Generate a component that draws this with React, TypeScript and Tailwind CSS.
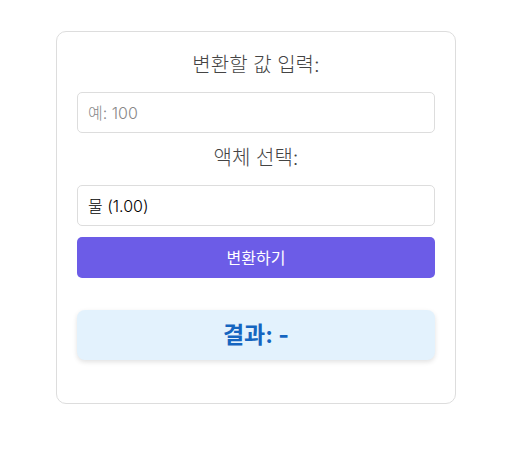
export default function App() {
  return (
    <div className="min-h-screen bg-white pt-[31px]" style={{ fontFamily: 'Inter, "Noto Sans CJK KR", sans-serif' }}>
      <div className="ml-[56px] w-[400px] rounded-[10px] border border-[#ddd] bg-white px-5 pt-5 pb-[43px]">
        <label className="block text-center text-[20px] font-light leading-[27px] text-[#444]">변환할 값 입력:</label>
        <input
          type="number"
          placeholder="예: 100"
          className="mt-[13px] block h-[41px] w-full rounded-[5px] border border-[#ddd] px-[10px] text-[16px] font-light text-[#222] placeholder-[#888] outline-none"
        />
        <label className="mt-[12px] block text-center text-[20px] font-light leading-[27px] text-[#444]">액체 선택:</label>
        <div className="mt-[13px] flex h-[41px] w-full items-center rounded-[5px] border border-[#ddd] px-[10px] text-[16px] font-light text-black">
          물 (1.00)
        </div>
        <button className="mt-[11px] block h-[41px] w-full rounded-[5px] bg-[#6c5ce7] text-[16px] text-white">
          변환하기
        </button>
        <div className="mt-[32px] flex h-[50px] items-center justify-center rounded-[8px] bg-[#e3f2fd] text-[23px] font-bold text-[#1565c0] shadow-[0_2px_5px_rgba(0,0,0,0.12)]">
          결과: -
        </div>
      </div>
    </div>
  );
}
